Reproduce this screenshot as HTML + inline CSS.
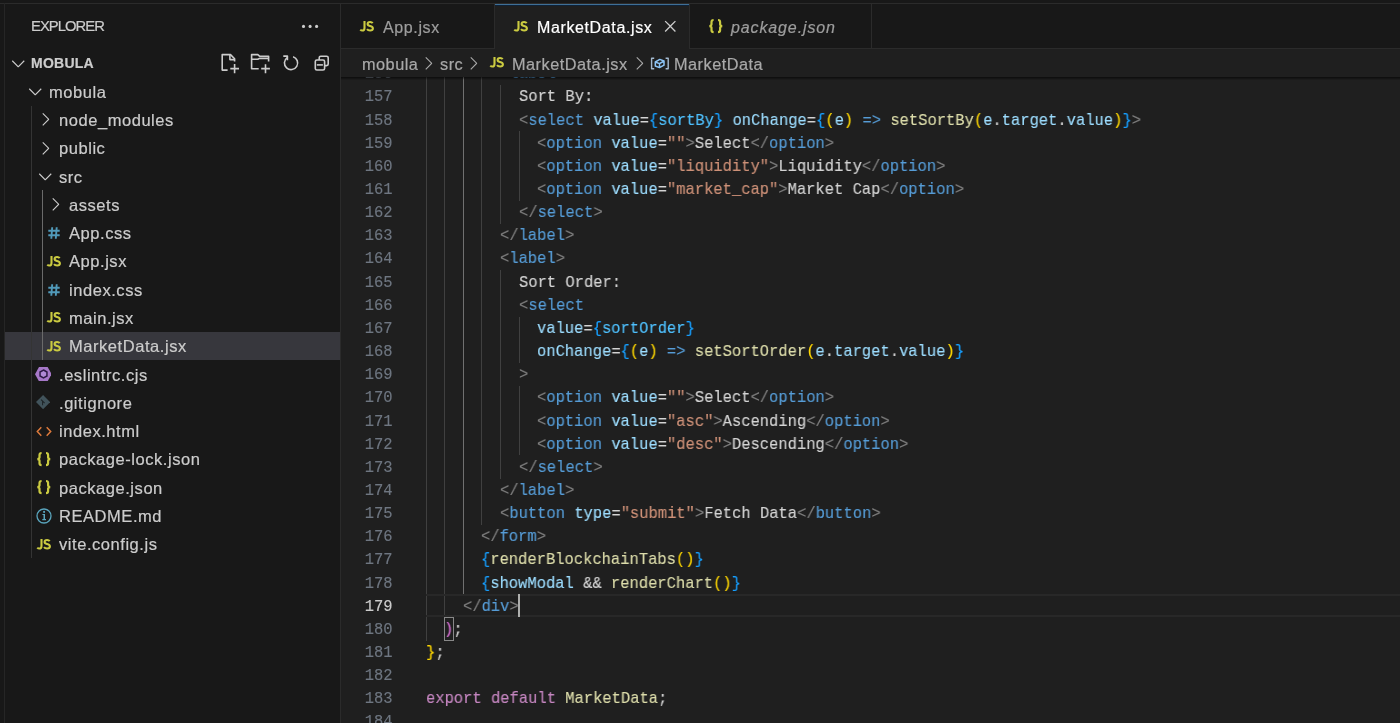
<!DOCTYPE html>
<html><head><meta charset="utf-8">
<style>
*{margin:0;padding:0;box-sizing:border-box}
html,body{width:1400px;height:723px;overflow:hidden;background:#181818}
body{position:relative;font-family:"Liberation Sans",sans-serif}
.abs{position:absolute}
#topline{position:absolute;left:0;top:3px;width:1400px;height:1px;background:#2b2b2b}
#leftline{position:absolute;left:4px;top:3px;width:1px;height:720px;background:#262626}
#sidebar{position:absolute;left:5px;top:4px;width:335px;height:719px;background:#181818}
#sbborder{position:absolute;left:340px;top:4px;width:1px;height:719px;background:#2b2b2b}
.sbtitle{position:absolute;left:25.5px;top:14.3px;font-size:14.8px;color:#cccccc;letter-spacing:-0.95px}
.gs{will-change:transform;-webkit-text-stroke:0.2px currentColor}
.row{position:absolute;left:0;width:335px;height:28.29px}
.row.sel{background:#37373d}
.rt{position:absolute;top:0;line-height:28.29px;font-size:16.5px;letter-spacing:0.55px;color:#cccccc;white-space:nowrap;margin-top:0.4px}
.ico{position:absolute}
.tguide{position:absolute;width:1px;background:#585858}
#editor{position:absolute;left:341px;top:4px;width:1059px;height:719px;background:#1f1f1f}
#tabs{position:absolute;left:341px;top:4px;width:1059px;height:44px;background:#181818}
#tabsborder{position:absolute;left:341px;top:48px;width:1059px;height:1px;background:#2b2b2b}
.tab{position:absolute;top:4px;height:44px;background:#181818;border-right:1px solid #2b2b2b}
.tab.act{background:#1f1f1f;height:45px}
.tab .tt{position:absolute;top:0;line-height:44px;font-size:16px;letter-spacing:0.62px;color:#9d9d9d;white-space:nowrap}
.tab.act .tt{color:#ffffff}
#bc{position:absolute;left:341px;top:49px;width:1059px;height:28px;background:#1f1f1f}
#bcshadow{position:absolute;left:341px;top:77px;width:1059px;height:3px;background:linear-gradient(rgba(0,0,0,0.6),rgba(0,0,0,0))}
.bt{position:absolute;top:49.5px;line-height:28.5px;font-size:16.3px;letter-spacing:0.5px;color:#a9a9a9;white-space:nowrap}
#code{position:absolute;left:341px;top:77px;width:1059px;height:646px;overflow:hidden}
#codein{position:absolute;left:-341px;top:-77px;width:1400px;height:723px}
.ln{position:absolute;left:340px;width:52.5px;text-align:right;height:23.15px;line-height:23.15px;font-family:"Liberation Mono",monospace;font-size:17px;white-space:pre;-webkit-text-stroke:0.15px currentColor;transform:scaleX(0.9098);transform-origin:right top}
.cl{position:absolute;height:23.15px;line-height:23.15px;font-family:"Liberation Mono",monospace;font-size:17px;white-space:pre;-webkit-text-stroke:0.15px currentColor;transform:scaleX(0.9098);transform-origin:left top;will-change:transform}
.ig{position:absolute;width:1px;background:#404040}
.ig.act{background:#707070}
.curline{position:absolute;left:425.8px;width:974.2px;border-top:2px solid #282828;border-bottom:2px solid #282828}
.cursor{position:absolute;width:2px;background:#aeafad}
.bm{position:absolute;border:1px solid #888888}
</style></head><body>
<div id="topline"></div>
<div id="leftline"></div>
<div id="sidebar">
  <div class="sbtitle gs">EXPLORER</div>
  
</div>
<div id="sbborder"></div>
<div id="editor"></div>
<div id="tabs"></div>
<div id="tabsborder"></div>
<svg class="ico" style="left:7.70px;top:52.91px" width="20.57" height="20.57" viewBox="0 0 16 16"><path fill="#cccccc" d="M7.976 10.072l4.357-4.357.62.618L8.284 11h-.618L3 6.333l.619-.618 4.357 4.357z"/></svg>
<div class="rt gs" style="left:31.3px;top:49.01px;margin-top:-0.4px;font-weight:bold;font-size:14px;letter-spacing:0.25px">MOBULA</div>
<div class="row sel" style="top:331.91px;left:5px"></div>
<svg class="ico" style="left:24.50px;top:81.16px" width="20.57" height="20.57" viewBox="0 0 16 16"><path fill="#cccccc" d="M7.976 10.072l4.357-4.357.62.618L8.284 11h-.618L3 6.333l.619-.618 4.357 4.357z"/></svg>
<div class="rt gs" style="left:48.70px;top:77.30px">mobula</div>
<svg class="ico" style="left:34.80px;top:109.45px" width="20.57" height="20.57" viewBox="0 0 16 16"><path fill="#cccccc" d="M10.072 8.024L5.715 3.667l.618-.62L11 7.716v.618L6.333 13l-.618-.619 4.357-4.357z"/></svg>
<div class="rt gs" style="left:59.20px;top:105.59px">node_modules</div>
<svg class="ico" style="left:34.80px;top:137.74px" width="20.57" height="20.57" viewBox="0 0 16 16"><path fill="#cccccc" d="M10.072 8.024L5.715 3.667l.618-.62L11 7.716v.618L6.333 13l-.618-.619 4.357-4.357z"/></svg>
<div class="rt gs" style="left:59.20px;top:133.88px">public</div>
<svg class="ico" style="left:34.80px;top:166.03px" width="20.57" height="20.57" viewBox="0 0 16 16"><path fill="#cccccc" d="M7.976 10.072l4.357-4.357.62.618L8.284 11h-.618L3 6.333l.619-.618 4.357 4.357z"/></svg>
<div class="rt gs" style="left:59.20px;top:162.17px">src</div>
<svg class="ico" style="left:45.10px;top:194.32px" width="20.57" height="20.57" viewBox="0 0 16 16"><path fill="#cccccc" d="M10.072 8.024L5.715 3.667l.618-.62L11 7.716v.618L6.333 13l-.618-.619 4.357-4.357z"/></svg>
<div class="rt gs" style="left:69.30px;top:190.46px">assets</div>
<svg class="ico" style="left:48.30px;top:227.05px" width="12" height="12" viewBox="0 0 12 12"><path fill="none" stroke="#519aba" stroke-width="1.9" d="M4.2 0.3L3.3 11.7M8.7 0.3L7.8 11.7M0.3 3.8H11.7M0.3 8.2H11.7"/></svg>
<div class="rt gs" style="left:69.30px;top:218.75px">App.css</div>
<svg class="ico" style="left:47.20px;top:255.74px;overflow:visible" width="13.60" height="10.50" viewBox="0 0 13.6 10.5"><path fill="none" stroke="#cbcb41" stroke-width="2.10" d="M4.5 0V6.9Q4.5 9.5 2.3 9.5Q1.1 9.5 0.3 8.6"/><path fill="none" stroke="#cbcb41" stroke-width="2.10" d="M12.7 2.1Q11.9 1 10.1 1Q7.6 1 7.6 2.9Q7.6 4.4 10 5Q12.9 5.7 12.9 7.5Q12.9 9.5 10.1 9.5Q8 9.5 7 8.2"/></svg>
<div class="rt gs" style="left:69.30px;top:247.04px">App.jsx</div>
<svg class="ico" style="left:48.30px;top:283.63px" width="12" height="12" viewBox="0 0 12 12"><path fill="none" stroke="#519aba" stroke-width="1.9" d="M4.2 0.3L3.3 11.7M8.7 0.3L7.8 11.7M0.3 3.8H11.7M0.3 8.2H11.7"/></svg>
<div class="rt gs" style="left:69.30px;top:275.33px">index.css</div>
<svg class="ico" style="left:47.20px;top:312.32px;overflow:visible" width="13.60" height="10.50" viewBox="0 0 13.6 10.5"><path fill="none" stroke="#cbcb41" stroke-width="2.10" d="M4.5 0V6.9Q4.5 9.5 2.3 9.5Q1.1 9.5 0.3 8.6"/><path fill="none" stroke="#cbcb41" stroke-width="2.10" d="M12.7 2.1Q11.9 1 10.1 1Q7.6 1 7.6 2.9Q7.6 4.4 10 5Q12.9 5.7 12.9 7.5Q12.9 9.5 10.1 9.5Q8 9.5 7 8.2"/></svg>
<div class="rt gs" style="left:69.30px;top:303.62px">main.jsx</div>
<svg class="ico" style="left:47.20px;top:340.61px;overflow:visible" width="13.60" height="10.50" viewBox="0 0 13.6 10.5"><path fill="none" stroke="#cbcb41" stroke-width="2.10" d="M4.5 0V6.9Q4.5 9.5 2.3 9.5Q1.1 9.5 0.3 8.6"/><path fill="none" stroke="#cbcb41" stroke-width="2.10" d="M12.7 2.1Q11.9 1 10.1 1Q7.6 1 7.6 2.9Q7.6 4.4 10 5Q12.9 5.7 12.9 7.5Q12.9 9.5 10.1 9.5Q8 9.5 7 8.2"/></svg>
<div class="rt gs" style="left:69.30px;top:331.91px">MarketData.jsx</div>
<svg class="ico" style="left:34.80px;top:366.80px" width="16.6" height="14.3" viewBox="0 0 16.6 14.3"><path fill="#a678c8" d="M4 0H12.6L16.6 7.15L12.6 14.3H4L0 7.15Z"/><path fill="#b08ad6" stroke="#2d1b45" stroke-width="1.5" d="M8.5 3L11.96 5V9L8.5 11L5.04 9V5Z"/></svg>
<div class="rt gs" style="left:59.00px;top:360.20px">.eslintrc.cjs</div>
<svg class="ico" style="left:35.80px;top:395.49px" width="14.2" height="14.2" viewBox="0 0 14 14"><path fill="#41535b" d="M7 0L14 7 7 14 0 7z"/><path fill="none" stroke="#1d2326" stroke-width="1" d="M5 4.5l3.5 3.5M6.5 6v4"/></svg>
<div class="rt gs" style="left:59.00px;top:388.49px">.gitignore</div>
<svg class="ico" style="left:35.50px;top:425.98px" width="16" height="11" viewBox="0 0 16 11"><path fill="none" stroke="#dd7a3c" stroke-width="1.5" d="M5.3 1.2L1.3 5.5 5.3 9.8M10.7 1.2l4 4.3-4 4.3"/></svg>
<div class="rt gs" style="left:59.00px;top:416.78px">index.html</div>
<svg class="ico" style="left:36.60px;top:451.67px;overflow:visible" width="13.60" height="14.10" viewBox="0 0 13.6 14.1"><path fill="none" stroke="#cbcb41" stroke-width="2.2" d="M4.6 1Q2.5 1 2.5 2.9V5.3Q2.5 6.7 0.5 7.05Q2.5 7.4 2.5 8.8V11.2Q2.5 13.1 4.6 13.1M9 1Q11.1 1 11.1 2.9V5.3Q11.1 6.7 13.1 7.05Q11.1 7.4 11.1 8.8V11.2Q11.1 13.1 9 13.1"/></svg>
<div class="rt gs" style="left:59.00px;top:445.07px">package-lock.json</div>
<svg class="ico" style="left:36.60px;top:479.96px;overflow:visible" width="13.60" height="14.10" viewBox="0 0 13.6 14.1"><path fill="none" stroke="#cbcb41" stroke-width="2.2" d="M4.6 1Q2.5 1 2.5 2.9V5.3Q2.5 6.7 0.5 7.05Q2.5 7.4 2.5 8.8V11.2Q2.5 13.1 4.6 13.1M9 1Q11.1 1 11.1 2.9V5.3Q11.1 6.7 13.1 7.05Q11.1 7.4 11.1 8.8V11.2Q11.1 13.1 9 13.1"/></svg>
<div class="rt gs" style="left:59.00px;top:473.36px">package.json</div>
<svg class="ico" style="left:35.50px;top:507.85px" width="16" height="16" viewBox="0 0 16 16"><circle cx="8" cy="8" r="7.0" fill="none" stroke="#5aa5bd" stroke-width="1.3"/><path fill="#5aa5bd" d="M6.4 5.9h2.6v5.2h1v1.1H6.3v-1.1h1.2V7h-1.1z"/><circle cx="8.1" cy="3.9" r="1.05" fill="#5aa5bd"/></svg>
<div class="rt gs" style="left:59.00px;top:501.65px">README.md</div>
<svg class="ico" style="left:36.70px;top:538.64px;overflow:visible" width="13.60" height="10.50" viewBox="0 0 13.6 10.5"><path fill="none" stroke="#cbcb41" stroke-width="2.10" d="M4.5 0V6.9Q4.5 9.5 2.3 9.5Q1.1 9.5 0.3 8.6"/><path fill="none" stroke="#cbcb41" stroke-width="2.10" d="M12.7 2.1Q11.9 1 10.1 1Q7.6 1 7.6 2.9Q7.6 4.4 10 5Q12.9 5.7 12.9 7.5Q12.9 9.5 10.1 9.5Q8 9.5 7 8.2"/></svg>
<div class="rt gs" style="left:59.00px;top:529.94px">vite.config.js</div>
<div class="tguide" style="left:31px;top:105.59px;height:452.64px;background:#343434"></div>
<div class="tguide" style="left:41.6px;top:190.46px;height:169.74px;background:#6a6a6a"></div>
<svg class="ico" style="left:0;top:0" width="341" height="80" viewBox="0 0 341 80" fill="none" stroke="#cccccc" stroke-width="1.6" stroke-linejoin="round"><path d="M227.6 70.1H222.2V54.6H230.5L234.6 58.7V61.6"/><path d="M229.9 54.8V59.6H234.5"/><path d="M230.3 68.6H239M234.6 64.1V73.2"/><path d="M258.7 68.8H251.6V54.6H257.8L259.5 56.2H268.6V61.6"/><path d="M251.6 59.3H257.8L259.5 58.4H268.6"/><path d="M261.2 68.6H269.9M265.5 64.3V73.2"/><path d="M293.1 56.7A6.6 6.6 0 1 1 287.2 57.6"/><path d="M283.3 56.1H287.4V60.3"/><rect x="315.3" y="60" width="9.3" height="10" rx="1.6"/><path d="M319.2 60V57.8Q319.2 56.2 320.8 56.2H326.6Q328.2 56.2 328.2 57.8V64Q328.2 65.6 326.6 65.6H324.6"/><path d="M316.8 64.9H322.9"/></svg>
<svg class="ico" style="left:0;top:0" width="341" height="40" viewBox="0 0 341 40"><circle cx="303.5" cy="26.4" r="1.55" fill="#cccccc"/><circle cx="310.1" cy="26.4" r="1.55" fill="#cccccc"/><circle cx="316.6" cy="26.4" r="1.55" fill="#cccccc"/></svg>
<div class="tab" style="left:341px;width:154px"></div>
<svg class="ico" style="left:359.50px;top:20.80px;overflow:visible" width="13.60" height="10.50" viewBox="0 0 13.6 10.5"><path fill="none" stroke="#cbcb41" stroke-width="2.10" d="M4.5 0V6.9Q4.5 9.5 2.3 9.5Q1.1 9.5 0.3 8.6"/><path fill="none" stroke="#cbcb41" stroke-width="2.10" d="M12.7 2.1Q11.9 1 10.1 1Q7.6 1 7.6 2.9Q7.6 4.4 10 5Q12.9 5.7 12.9 7.5Q12.9 9.5 10.1 9.5Q8 9.5 7 8.2"/></svg>
<div class="tt abs gs" style="left:382.5px;top:6px;line-height:44px;font-size:16px;letter-spacing:0.62px;color:#9d9d9d">App.jsx</div>
<div class="tab act" style="left:495px;width:195px"></div>
<div class="abs" style="left:495px;top:4px;width:194px;height:1px;background:#3f6f96"></div><div class="abs" style="left:495px;top:5px;width:194px;height:1px;background:#0e2136"></div>
<svg class="ico" style="left:513.90px;top:20.70px;overflow:visible" width="13.60" height="10.50" viewBox="0 0 13.6 10.5"><path fill="none" stroke="#cbcb41" stroke-width="2.10" d="M4.5 0V6.9Q4.5 9.5 2.3 9.5Q1.1 9.5 0.3 8.6"/><path fill="none" stroke="#cbcb41" stroke-width="2.10" d="M12.7 2.1Q11.9 1 10.1 1Q7.6 1 7.6 2.9Q7.6 4.4 10 5Q12.9 5.7 12.9 7.5Q12.9 9.5 10.1 9.5Q8 9.5 7 8.2"/></svg>
<div class="abs gs" style="left:536.5px;top:6px;line-height:44px;font-size:16px;letter-spacing:0.62px;color:#ffffff">MarketData.jsx</div>
<svg class="ico" style="left:660px;top:16px" width="20.57" height="20.57" viewBox="0 0 16 16"><path fill="#cccccc" d="M8 8.707l3.646 3.647.708-.707L8.707 8l3.647-3.646-.707-.708L8 7.293 4.354 3.646l-.707.708L7.293 8l-3.646 3.646.707.708L8 8.707z"/></svg>
<div class="tab" style="left:690px;width:182px"></div>
<svg class="ico" style="left:708.90px;top:19.00px;overflow:visible" width="13.60" height="14.10" viewBox="0 0 13.6 14.1"><path fill="none" stroke="#cbcb41" stroke-width="2.2" d="M4.6 1Q2.5 1 2.5 2.9V5.3Q2.5 6.7 0.5 7.05Q2.5 7.4 2.5 8.8V11.2Q2.5 13.1 4.6 13.1M9 1Q11.1 1 11.1 2.9V5.3Q11.1 6.7 13.1 7.05Q11.1 7.4 11.1 8.8V11.2Q11.1 13.1 9 13.1"/></svg>
<div class="abs gs" style="left:731px;top:6px;line-height:44px;font-size:16px;letter-spacing:0.88px;color:#9d9d9d;font-style:italic">package.json</div>
<div id="bc"></div>
<div class="bt gs" style="left:362px">mobula</div>
<svg class="ico" style="left:418.35px;top:52.90px" width="20.57" height="20.57" viewBox="0 0 16 16"><path fill="#a9a9a9" d="M10.072 8.024L5.715 3.667l.618-.62L11 7.716v.618L6.333 13l-.618-.619 4.357-4.357z"/></svg>
<div class="bt gs" style="left:440px">src</div>
<svg class="ico" style="left:463.35px;top:52.90px" width="20.57" height="20.57" viewBox="0 0 16 16"><path fill="#a9a9a9" d="M10.072 8.024L5.715 3.667l.618-.62L11 7.716v.618L6.333 13l-.618-.619 4.357-4.357z"/></svg>
<svg class="ico" style="left:489.50px;top:57.00px;overflow:visible" width="13.60" height="10.50" viewBox="0 0 13.6 10.5"><path fill="none" stroke="#cbcb41" stroke-width="2.10" d="M4.5 0V6.9Q4.5 9.5 2.3 9.5Q1.1 9.5 0.3 8.6"/><path fill="none" stroke="#cbcb41" stroke-width="2.10" d="M12.7 2.1Q11.9 1 10.1 1Q7.6 1 7.6 2.9Q7.6 4.4 10 5Q12.9 5.7 12.9 7.5Q12.9 9.5 10.1 9.5Q8 9.5 7 8.2"/></svg>
<div class="bt gs" style="left:512px">MarketData.jsx</div>
<svg class="ico" style="left:628.85px;top:52.90px" width="20.57" height="20.57" viewBox="0 0 16 16"><path fill="#a9a9a9" d="M10.072 8.024L5.715 3.667l.618-.62L11 7.716v.618L6.333 13l-.618-.619 4.357-4.357z"/></svg>
<svg class="ico" style="left:644px;top:52px" width="30" height="22" viewBox="0 0 30 22" fill="none" stroke-linejoin="round"><path stroke="#a3b9cf" stroke-width="1.4" d="M10.2 6.2H7.6V16.8H10.2M21.6 6.2H24.2V16.8H21.6"/><path stroke="#8cc4f6" stroke-width="1.5" d="M11.3 10L15.8 7.4L20 9V13.2L15.5 15.6L11.3 14Z M11.3 10L15.5 11.6L20 9M15.5 11.6V15.6"/></svg>
<div class="bt gs" style="left:674px">MarketData</div>
<div id="code"><div id="codein">
<div class="ig" style="left:425.80px;top:-77.05px;height:717.65px"></div>
<div class="ig" style="left:444.36px;top:-77.05px;height:694.50px"></div>
<div class="ig act" style="left:462.92px;top:-77.05px;height:671.35px"></div>
<div class="ig" style="left:481.48px;top:-77.05px;height:601.90px"></div>
<div class="ig" style="left:500.04px;top:85.00px;height:138.90px"></div>
<div class="ig" style="left:500.04px;top:270.20px;height:208.35px"></div>
<div class="ig" style="left:518.60px;top:131.30px;height:69.45px"></div>
<div class="ig" style="left:518.60px;top:316.50px;height:46.30px"></div>
<div class="ig" style="left:518.60px;top:385.95px;height:69.45px"></div>
<div class="ln" style="top:62.25px;color:#6e7681">156</div>
<div class="cl" style="top:62.25px;left:500.04px"><span style="color:#808080">&lt;</span><span style="color:#569cd6">label</span><span style="color:#808080">&gt;</span></div>
<div class="ln" style="top:85.40px;color:#6e7681">157</div>
<div class="cl" style="top:85.40px;left:518.60px"><span style="color:#d4d4d4">Sort By:</span></div>
<div class="ln" style="top:108.55px;color:#6e7681">158</div>
<div class="cl" style="top:108.55px;left:518.60px"><span style="color:#808080">&lt;</span><span style="color:#569cd6">select</span><span style="color:#d4d4d4"> </span><span style="color:#9cdcfe">value</span><span style="color:#d4d4d4">=</span><span style="color:#179fff">{</span><span style="color:#4fc1ff">sortBy</span><span style="color:#179fff">}</span><span style="color:#d4d4d4"> </span><span style="color:#9cdcfe">onChange</span><span style="color:#d4d4d4">=</span><span style="color:#179fff">{</span><span style="color:#ffd700">(</span><span style="color:#9cdcfe">e</span><span style="color:#ffd700">)</span><span style="color:#d4d4d4"> </span><span style="color:#569cd6">=&gt;</span><span style="color:#d4d4d4"> </span><span style="color:#dcdcaa">setSortBy</span><span style="color:#ffd700">(</span><span style="color:#9cdcfe">e</span><span style="color:#d4d4d4">.</span><span style="color:#9cdcfe">target</span><span style="color:#d4d4d4">.</span><span style="color:#9cdcfe">value</span><span style="color:#ffd700">)</span><span style="color:#179fff">}</span><span style="color:#808080">&gt;</span></div>
<div class="ln" style="top:131.70px;color:#6e7681">159</div>
<div class="cl" style="top:131.70px;left:537.16px"><span style="color:#808080">&lt;</span><span style="color:#569cd6">option</span><span style="color:#d4d4d4"> </span><span style="color:#9cdcfe">value</span><span style="color:#d4d4d4">=</span><span style="color:#ce9178">""</span><span style="color:#808080">&gt;</span><span style="color:#d4d4d4">Select</span><span style="color:#808080">&lt;/</span><span style="color:#569cd6">option</span><span style="color:#808080">&gt;</span></div>
<div class="ln" style="top:154.85px;color:#6e7681">160</div>
<div class="cl" style="top:154.85px;left:537.16px"><span style="color:#808080">&lt;</span><span style="color:#569cd6">option</span><span style="color:#d4d4d4"> </span><span style="color:#9cdcfe">value</span><span style="color:#d4d4d4">=</span><span style="color:#ce9178">"liquidity"</span><span style="color:#808080">&gt;</span><span style="color:#d4d4d4">Liquidity</span><span style="color:#808080">&lt;/</span><span style="color:#569cd6">option</span><span style="color:#808080">&gt;</span></div>
<div class="ln" style="top:178.00px;color:#6e7681">161</div>
<div class="cl" style="top:178.00px;left:537.16px"><span style="color:#808080">&lt;</span><span style="color:#569cd6">option</span><span style="color:#d4d4d4"> </span><span style="color:#9cdcfe">value</span><span style="color:#d4d4d4">=</span><span style="color:#ce9178">"market_cap"</span><span style="color:#808080">&gt;</span><span style="color:#d4d4d4">Market Cap</span><span style="color:#808080">&lt;/</span><span style="color:#569cd6">option</span><span style="color:#808080">&gt;</span></div>
<div class="ln" style="top:201.15px;color:#6e7681">162</div>
<div class="cl" style="top:201.15px;left:518.60px"><span style="color:#808080">&lt;/</span><span style="color:#569cd6">select</span><span style="color:#808080">&gt;</span></div>
<div class="ln" style="top:224.30px;color:#6e7681">163</div>
<div class="cl" style="top:224.30px;left:500.04px"><span style="color:#808080">&lt;/</span><span style="color:#569cd6">label</span><span style="color:#808080">&gt;</span></div>
<div class="ln" style="top:247.45px;color:#6e7681">164</div>
<div class="cl" style="top:247.45px;left:500.04px"><span style="color:#808080">&lt;</span><span style="color:#569cd6">label</span><span style="color:#808080">&gt;</span></div>
<div class="ln" style="top:270.60px;color:#6e7681">165</div>
<div class="cl" style="top:270.60px;left:518.60px"><span style="color:#d4d4d4">Sort Order:</span></div>
<div class="ln" style="top:293.75px;color:#6e7681">166</div>
<div class="cl" style="top:293.75px;left:518.60px"><span style="color:#808080">&lt;</span><span style="color:#569cd6">select</span></div>
<div class="ln" style="top:316.90px;color:#6e7681">167</div>
<div class="cl" style="top:316.90px;left:537.16px"><span style="color:#9cdcfe">value</span><span style="color:#d4d4d4">=</span><span style="color:#179fff">{</span><span style="color:#4fc1ff">sortOrder</span><span style="color:#179fff">}</span></div>
<div class="ln" style="top:340.05px;color:#6e7681">168</div>
<div class="cl" style="top:340.05px;left:537.16px"><span style="color:#9cdcfe">onChange</span><span style="color:#d4d4d4">=</span><span style="color:#179fff">{</span><span style="color:#ffd700">(</span><span style="color:#9cdcfe">e</span><span style="color:#ffd700">)</span><span style="color:#d4d4d4"> </span><span style="color:#569cd6">=&gt;</span><span style="color:#d4d4d4"> </span><span style="color:#dcdcaa">setSortOrder</span><span style="color:#ffd700">(</span><span style="color:#9cdcfe">e</span><span style="color:#d4d4d4">.</span><span style="color:#9cdcfe">target</span><span style="color:#d4d4d4">.</span><span style="color:#9cdcfe">value</span><span style="color:#ffd700">)</span><span style="color:#179fff">}</span></div>
<div class="ln" style="top:363.20px;color:#6e7681">169</div>
<div class="cl" style="top:363.20px;left:518.60px"><span style="color:#808080">&gt;</span></div>
<div class="ln" style="top:386.35px;color:#6e7681">170</div>
<div class="cl" style="top:386.35px;left:537.16px"><span style="color:#808080">&lt;</span><span style="color:#569cd6">option</span><span style="color:#d4d4d4"> </span><span style="color:#9cdcfe">value</span><span style="color:#d4d4d4">=</span><span style="color:#ce9178">""</span><span style="color:#808080">&gt;</span><span style="color:#d4d4d4">Select</span><span style="color:#808080">&lt;/</span><span style="color:#569cd6">option</span><span style="color:#808080">&gt;</span></div>
<div class="ln" style="top:409.50px;color:#6e7681">171</div>
<div class="cl" style="top:409.50px;left:537.16px"><span style="color:#808080">&lt;</span><span style="color:#569cd6">option</span><span style="color:#d4d4d4"> </span><span style="color:#9cdcfe">value</span><span style="color:#d4d4d4">=</span><span style="color:#ce9178">"asc"</span><span style="color:#808080">&gt;</span><span style="color:#d4d4d4">Ascending</span><span style="color:#808080">&lt;/</span><span style="color:#569cd6">option</span><span style="color:#808080">&gt;</span></div>
<div class="ln" style="top:432.65px;color:#6e7681">172</div>
<div class="cl" style="top:432.65px;left:537.16px"><span style="color:#808080">&lt;</span><span style="color:#569cd6">option</span><span style="color:#d4d4d4"> </span><span style="color:#9cdcfe">value</span><span style="color:#d4d4d4">=</span><span style="color:#ce9178">"desc"</span><span style="color:#808080">&gt;</span><span style="color:#d4d4d4">Descending</span><span style="color:#808080">&lt;/</span><span style="color:#569cd6">option</span><span style="color:#808080">&gt;</span></div>
<div class="ln" style="top:455.80px;color:#6e7681">173</div>
<div class="cl" style="top:455.80px;left:518.60px"><span style="color:#808080">&lt;/</span><span style="color:#569cd6">select</span><span style="color:#808080">&gt;</span></div>
<div class="ln" style="top:478.95px;color:#6e7681">174</div>
<div class="cl" style="top:478.95px;left:500.04px"><span style="color:#808080">&lt;/</span><span style="color:#569cd6">label</span><span style="color:#808080">&gt;</span></div>
<div class="ln" style="top:502.10px;color:#6e7681">175</div>
<div class="cl" style="top:502.10px;left:500.04px"><span style="color:#808080">&lt;</span><span style="color:#569cd6">button</span><span style="color:#d4d4d4"> </span><span style="color:#9cdcfe">type</span><span style="color:#d4d4d4">=</span><span style="color:#ce9178">"submit"</span><span style="color:#808080">&gt;</span><span style="color:#d4d4d4">Fetch Data</span><span style="color:#808080">&lt;/</span><span style="color:#569cd6">button</span><span style="color:#808080">&gt;</span></div>
<div class="ln" style="top:525.25px;color:#6e7681">176</div>
<div class="cl" style="top:525.25px;left:481.48px"><span style="color:#808080">&lt;/</span><span style="color:#569cd6">form</span><span style="color:#808080">&gt;</span></div>
<div class="ln" style="top:548.40px;color:#6e7681">177</div>
<div class="cl" style="top:548.40px;left:481.48px"><span style="color:#179fff">{</span><span style="color:#dcdcaa">renderBlockchainTabs</span><span style="color:#ffd700">()</span><span style="color:#179fff">}</span></div>
<div class="ln" style="top:571.55px;color:#6e7681">178</div>
<div class="cl" style="top:571.55px;left:481.48px"><span style="color:#179fff">{</span><span style="color:#9cdcfe">showModal</span><span style="color:#d4d4d4"> &amp;&amp; </span><span style="color:#dcdcaa">renderChart</span><span style="color:#ffd700">()</span><span style="color:#179fff">}</span></div>
<div class="ln" style="top:594.70px;color:#cccccc">179</div>
<div class="cl" style="top:594.70px;left:462.92px"><span style="color:#808080">&lt;/</span><span style="color:#569cd6">div</span><span style="color:#808080">&gt;</span></div>
<div class="ln" style="top:617.85px;color:#6e7681">180</div>
<div class="cl" style="top:617.85px;left:444.36px"><span style="color:#da70d6">)</span><span style="color:#d4d4d4">;</span></div>
<div class="ln" style="top:641.00px;color:#6e7681">181</div>
<div class="cl" style="top:641.00px;left:425.80px"><span style="color:#ffd700">}</span><span style="color:#d4d4d4">;</span></div>
<div class="ln" style="top:664.15px;color:#6e7681">182</div>
<div class="cl" style="top:664.15px;left:425.80px"></div>
<div class="ln" style="top:687.30px;color:#6e7681">183</div>
<div class="cl" style="top:687.30px;left:425.80px"><span style="color:#c586c0">export</span><span style="color:#d4d4d4"> </span><span style="color:#c586c0">default</span><span style="color:#d4d4d4"> </span><span style="color:#dcdcaa">MarketData</span><span style="color:#d4d4d4">;</span></div>
<div class="ln" style="top:710.45px;color:#6e7681">184</div>
<div class="cl" style="top:710.45px;left:425.80px"></div>
<div class="curline" style="top:594.30px;height:23.15px"></div><div class="cursor" style="left:517.60px;top:594.30px;height:23.15px"></div><div class="bm" style="left:444.36px;top:617.45px;width:9.28px;height:23.15px"></div>
</div></div>
<div id="bcshadow"></div>
</body></html>
